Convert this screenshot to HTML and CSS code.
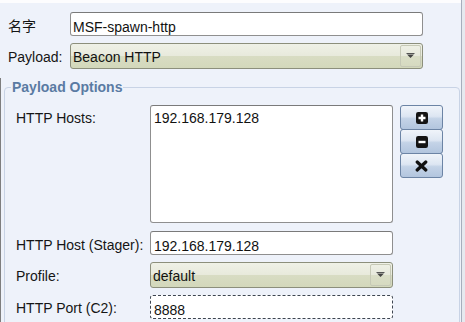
FILE: index.html
```html
<!DOCTYPE html>
<html>
<head>
<meta charset="utf-8">
<link rel="stylesheet" href="styles.css">
</head>
<body>
<div class="window">
  <div class="topstrip"></div>
  <div class="form">
    <div class="row">
      <label class="lbl">名字</label>
      <input class="field wide" type="text" value="MSF-spawn-http">
    </div>
    <div class="row">
      <label class="lbl">Payload:</label>
      <div class="combo wide">
        <span class="combo-text">Beacon HTTP</span>
        <span class="combo-btn"><svg width="9" height="6" viewBox="0 0 9 6"><rect x="0.5" y="0" width="8" height="1" fill="#555"/><path d="M1 1.5h7L4.5 5z" fill="#444"/></svg></span>
      </div>
    </div>
  </div>
  <div class="lower">
    <fieldset class="group">
      <legend>Payload Options</legend>
      <div class="grid">
        <label class="lbl lbl-hosts">HTTP Hosts:</label>
        <div class="hosts">
          <textarea class="area" spellcheck="false">192.168.179.128</textarea>
          <div class="btns">
            <button class="btn" type="button"><svg width="12" height="12" viewBox="0 0 12 12"><rect x="0" y="0" width="12" height="12" rx="2.2" fill="#141414"/><path d="M6 2.5v7M2.5 6h7" stroke="#fff" stroke-width="2.4"/></svg></button>
            <button class="btn" type="button"><svg width="12" height="12" viewBox="0 0 12 12"><rect x="0" y="0" width="12" height="12" rx="2.2" fill="#141414"/><path d="M2.5 6h7" stroke="#fff" stroke-width="2.4"/></svg></button>
            <button class="btn" type="button"><svg width="13" height="12" viewBox="0 0 13 12"><path d="M2.2 2l8.6 8M10.8 2l-8.6 8" stroke="#111" stroke-width="3.2" stroke-linecap="round"/></svg></button>
          </div>
        </div>

        <label class="lbl">HTTP Host (Stager):</label>
        <input class="field narrow" type="text" value="192.168.179.128">

        <label class="lbl">Profile:</label>
        <div class="combo narrow">
          <span class="combo-text">default</span>
          <span class="combo-btn"><svg width="9" height="6" viewBox="0 0 9 6"><rect x="0.5" y="0" width="8" height="1" fill="#555"/><path d="M1 1.5h7L4.5 5z" fill="#444"/></svg></span>
        </div>

        <label class="lbl lbl-port">HTTP Port (C2):</label>
        <input class="field narrow focused" type="text" value="8888">
      </div>
    </fieldset>
  </div>
</div>
</body>
</html>
```

FILE: styles.css
```css
* {
  box-sizing: border-box;
}

html, body {
  margin: 0;
  padding: 0;
}

body {
  background: #e6e9ef;
  font-family: "Liberation Sans", "Noto Sans CJK SC", sans-serif;
  font-size: 14px;
  line-height: 16px;
  color: #111;
  overflow: hidden;
}

.window {
  width: 462px;
  height: 322px;
  background: #eef2fa;
  border-right: 1px solid #a7aebc;
  overflow: hidden;
}

.topstrip {
  height: 3px;
  background: #fdfdfe;
}

.form {
  display: grid;
  row-gap: 7px;
  padding: 9px 0 0 8px;
}

.row {
  display: grid;
  grid-template-columns: 62px 353px;
  align-items: start;
}

.lbl {
  display: block;
  padding-top: 6px;
  color: #151515;
  white-space: nowrap;
}

.field {
  display: block;
  height: 24px;
  margin: 0;
  padding: 5px 2px 0;
  font: inherit;
  line-height: 16px;
  color: #111;
  background: #fff;
  border: 1px solid #8f8f8f;
  border-top-color: #7a7a7a;
  border-radius: 3px;
  outline: none;
  -webkit-appearance: none;
  appearance: none;
}

.wide {
  width: 353px;
}

.narrow {
  width: 243px;
  padding-left: 3px;
}

.focused {
  border: 1px dashed #3d4550;
}

.combo {
  display: flex;
  justify-content: space-between;
  height: 26px;
  padding: 5px 2px 0 2px;
  border: 1px solid #8c8f7c;
  border-radius: 3px;
  background: linear-gradient(#eff1e7 0%, #e8eadc 48%, #d8dcc3 52%, #d3d8bb 100%);
}

.combo-text {
  line-height: 16px;
  color: #111;
}

.combo-btn {
  display: flex;
  align-items: center;
  justify-content: center;
  width: 21px;
  height: 22px;
  margin-top: -4px;
  margin-right: -1px;
  border: 1px solid #c6c9b6;
  border-radius: 2px;
  background: linear-gradient(#eef0e5 0%, #e7e9dc 48%, #dadec7 52%, #d6dac0 100%);
}

.lower {
  margin-top: 9px;
  padding: 1px 0 0 3px;
  border-left: 1px solid #7e7e7e;
}

.group {
  width: 456px;
  margin: 0;
  padding: 0 0 20px 0;
  border: 1px solid #c8d3e5;
  border-radius: 4px;
  min-inline-size: 0;
}

.group legend {
  margin-left: 6px;
  padding: 0 1px;
  font-weight: bold;
  font-size: 14px;
  line-height: 16px;
  color: #5a7ba3;
}

.grid {
  display: grid;
  grid-template-columns: 134px 1fr;
  grid-template-rows: 119px 24px 26px 24px;
  row-gap: 7px;
  margin-top: 10px;
  padding-left: 11px;
  align-items: start;
}

.lbl-hosts {
  padding-top: 5px;
}

.lbl-port {
  padding-top: 5px;
}

.hosts {
  display: flex;
  align-items: flex-start;
  column-gap: 7px;
}

.area {
  display: block;
  width: 243px;
  height: 118px;
  margin: 0;
  padding: 4px 3px;
  font: inherit;
  line-height: 16px;
  color: #111;
  background: #fff;
  border: 1px solid #8f8f8f;
  border-top-color: #7a7a7a;
  border-radius: 3px;
  resize: none;
  overflow: hidden;
  outline: none;
}

.btns {
  display: flex;
  flex-direction: column;
}

.btn {
  display: flex;
  align-items: center;
  justify-content: center;
  width: 43px;
  height: 25px;
  margin: 0 0 -1px 0;
  padding: 0;
  border: 1px solid #6c84a5;
  border-radius: 3px;
  background: linear-gradient(#f0f4fa 0%, #dde6f2 45%, #c4d3e7 55%, #b2c5de 100%);
}
```
